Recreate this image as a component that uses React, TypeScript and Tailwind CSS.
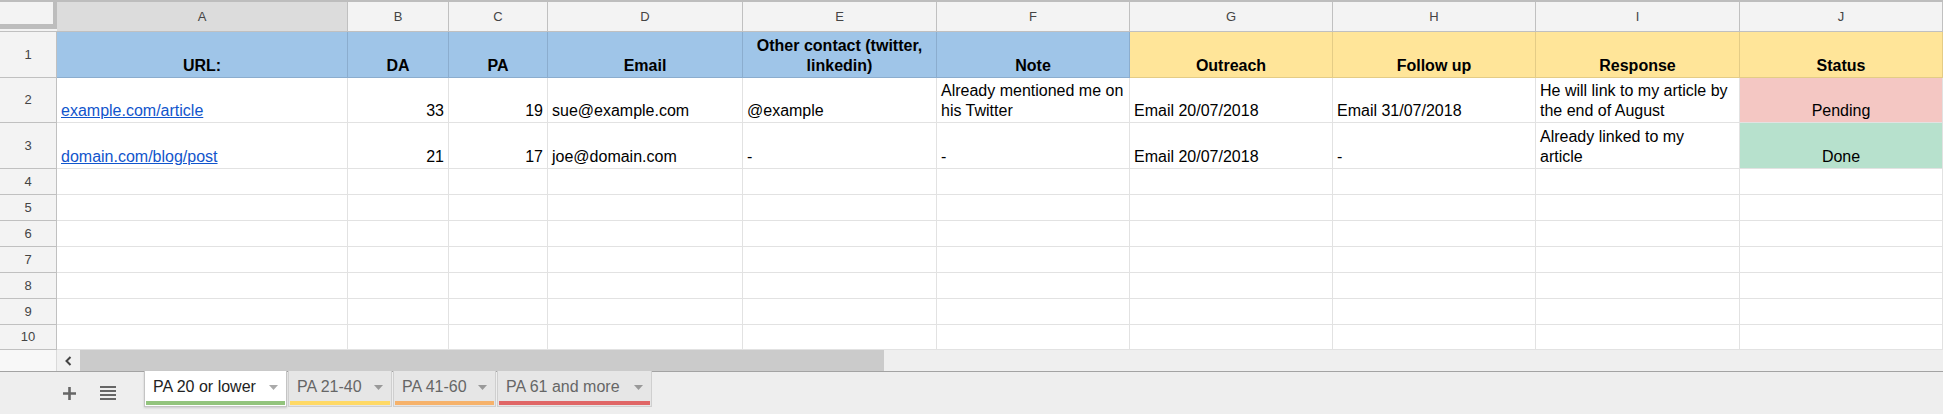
import React from 'react';

const GRID = 'grid grid-cols-[57px_291px_101px_99px_195px_194px_193px_203px_203px_204px_203px]';

const LETTERS = ['A', 'B', 'C', 'D', 'E', 'F', 'G', 'H', 'I', 'J'];

type HeadCell = { lines: string[]; tone: 'blue' | 'yellow' };

const HEADERS: HeadCell[] = [
  { lines: ['URL:'], tone: 'blue' },
  { lines: ['DA'], tone: 'blue' },
  { lines: ['PA'], tone: 'blue' },
  { lines: ['Email'], tone: 'blue' },
  { lines: ['Other contact (twitter,', 'linkedin)'], tone: 'blue' },
  { lines: ['Note'], tone: 'blue' },
  { lines: ['Outreach'], tone: 'yellow' },
  { lines: ['Follow up'], tone: 'yellow' },
  { lines: ['Response'], tone: 'yellow' },
  { lines: ['Status'], tone: 'yellow' },
];

type Row = {
  url: string;
  da: string;
  pa: string;
  email: string;
  other: string;
  note: string[];
  outreach: string;
  followUp: string;
  response: string[];
  status: 'Pending' | 'Done';
};

const ROWS: Row[] = [
  {
    url: 'example.com/article',
    da: '33',
    pa: '19',
    email: 'sue@example.com',
    other: '@example',
    note: ['Already mentioned me on', 'his Twitter'],
    outreach: 'Email 20/07/2018',
    followUp: 'Email 31/07/2018',
    response: ['He will link to my article by', 'the end of August'],
    status: 'Pending',
  },
  {
    url: 'domain.com/blog/post',
    da: '21',
    pa: '17',
    email: 'joe@domain.com',
    other: '-',
    note: ['-'],
    outreach: 'Email 20/07/2018',
    followUp: '-',
    response: ['Already linked to my', 'article'],
    status: 'Done',
  },
];

const EMPTY_ROWS = [
  { n: 4, h: 'h-[26px]' },
  { n: 5, h: 'h-[26px]' },
  { n: 6, h: 'h-[26px]' },
  { n: 7, h: 'h-[26px]' },
  { n: 8, h: 'h-[26px]' },
  { n: 9, h: 'h-[26px]' },
  { n: 10, h: 'h-[25px]' },
];

const TABS = [
  { name: 'PA 20 or lower', bar: 'bg-[#93c47d]', active: true, w: 'w-[143px]' },
  { name: 'PA 21-40', bar: 'bg-[#ffd966]', active: false, w: 'w-[104px]' },
  { name: 'PA 41-60', bar: 'bg-[#f6b26b]', active: false, w: 'w-[103px]' },
  { name: 'PA 61 and more', bar: 'bg-[#e06666]', active: false, w: 'w-[155px]' },
];

const cell = 'border-r border-b border-[#e2e2e2] flex items-end px-[4px] pb-[1px] leading-[20px] text-[16px] text-black';

function RowHead({ n }: { n: number }) {
  return (
    <div className="bg-[#f3f3f3] border-r border-b border-[#c0c0c0] flex items-center justify-center text-[13px] text-[#444]">
      {n}
    </div>
  );
}

function Lines({ lines }: { lines: string[] }) {
  return (
    <div>
      {lines.map((l, i) => (
        <div key={i} className="whitespace-nowrap">{l}</div>
      ))}
    </div>
  );
}

function Caret({ color }: { color: string }) {
  return (
    <svg width="9" height="5" viewBox="0 0 9 5" className="shrink-0">
      <path d="M0 0h9L4.5 5z" fill={color} />
    </svg>
  );
}

export default function App() {
  return (
    <div className="w-[1943px] h-[414px] overflow-hidden bg-white font-['Liberation_Sans',Arial,sans-serif]">
      {/* top strip */}
      <div className="h-[2px] bg-[#bdbdbd]" />

      {/* column letters */}
      <div className={`${GRID} h-[30px]`}>
        <div className="bg-[#f3f3f3] border-b border-[#c0c0c0] flex flex-col">
          <div className="flex-1 flex">
            <div className="flex-1" />
            <div className="w-[4px] bg-[#bdbdbd]" />
          </div>
          <div className="h-[5px] bg-[#bdbdbd]" />
          <div className="h-[2px]" />
        </div>
        {LETTERS.map((l, i) => (
          <div
            key={l}
            className={`${i === 0 ? 'bg-[#dcdcdc]' : 'bg-[#f3f3f3]'} border-r border-b border-[#c0c0c0] flex items-center justify-center text-[13px] text-[#444]`}
          >
            {l}
          </div>
        ))}
      </div>

      {/* row 1 - headers */}
      <div className={`${GRID} h-[46px]`}>
        <RowHead n={1} />
        {HEADERS.map((h, i) => (
          <div
            key={i}
            className={`${h.tone === 'blue' ? 'bg-[#9fc5e8] border-[#8badce]' : 'bg-[#ffe599] border-[#e4cc86]'} border-r border-b flex items-end justify-center text-center pb-[1px] leading-[20px] text-[16px] font-bold text-black`}
          >
            <Lines lines={h.lines} />
          </div>
        ))}
      </div>

      {/* data rows */}
      {ROWS.map((r, idx) => (
        <div key={idx} className={`${GRID} ${idx === 0 ? 'h-[45px]' : 'h-[46px]'}`}>
          <RowHead n={idx + 2} />
          <div className={cell}>
            <span className="text-[#1155cc] underline">{r.url}</span>
          </div>
          <div className={`${cell} justify-end`}>{r.da}</div>
          <div className={`${cell} justify-end`}>{r.pa}</div>
          <div className={cell}>{r.email}</div>
          <div className={cell}>{r.other}</div>
          <div className={cell}><Lines lines={r.note} /></div>
          <div className={cell}>{r.outreach}</div>
          <div className={cell}>{r.followUp}</div>
          <div className={cell}><Lines lines={r.response} /></div>
          <div className={`${cell} justify-center ${r.status === 'Pending' ? 'bg-[#f4c7c3]' : 'bg-[#b7e1cd]'}`}>
            {r.status}
          </div>
        </div>
      ))}

      {/* empty rows */}
      {EMPTY_ROWS.map((r) => (
        <div key={r.n} className={`${GRID} ${r.h}`}>
          <RowHead n={r.n} />
          {LETTERS.map((l) => (
            <div key={l} className="border-r border-b border-[#e2e2e2]" />
          ))}
        </div>
      ))}

      {/* horizontal scrollbar */}
      <div className="flex h-[21px]">
        <div className="w-[57px] bg-[#f8f8f8] border-r border-[#dadada]" />
        <div className="w-[23px] bg-[#f1f1f1] flex items-center justify-center">
          <svg width="9" height="10" viewBox="0 0 9 10">
            <path d="M6.5 1L2.5 5l4 4" fill="none" stroke="#444" strokeWidth="2" />
          </svg>
        </div>
        <div className="w-[804px] bg-[#cbcbcb]" />
        <div className="flex-1 bg-[#efefef]" />
      </div>

      {/* sheet tabs */}
      <div className="h-[43px] bg-[#eeeeee] border-t border-[#a3a3a3] flex items-start">
        <div className="w-[144px] h-[42px] flex items-center">
          <svg width="13" height="13" viewBox="0 0 13 13" className="ml-[63px]">
            <path d="M6.5 0v13M0 6.5h13" stroke="#666" strokeWidth="2.6" />
          </svg>
          <svg width="16" height="14" viewBox="0 0 16 14" className="ml-[24px]">
            <rect x="0" y="0" width="16" height="2" fill="#666" />
            <rect x="0" y="4" width="16" height="2" fill="#666" />
            <rect x="0" y="8" width="16" height="2" fill="#666" />
            <rect x="0" y="12" width="16" height="2" fill="#666" />
          </svg>
        </div>
        <div className="flex gap-[1px] -mt-[1px]">
          {TABS.map((t) => (
            <div
              key={t.name}
              className={`${t.w} h-[36px] flex flex-col border-x border-b ${t.active ? 'bg-white border-[#c4c4c4] shadow-[0_1px_2px_rgba(0,0,0,0.15)]' : 'bg-[#e6e6e6] border-[#cfcfcf]'}`}
            >
              <div className="flex-1 flex items-center justify-between pl-[8px] pr-[8px] pt-[2px]">
                <span className={`text-[16px] whitespace-nowrap ${t.active ? 'text-[#222]' : 'text-[#666]'}`}>{t.name}</span>
                <Caret color={t.active ? '#aaa' : '#999'} />
              </div>
              <div className={`h-[4px] mx-[1px] mb-[1px] ${t.bar}`} />
            </div>
          ))}
        </div>
      </div>
    </div>
  );
}
